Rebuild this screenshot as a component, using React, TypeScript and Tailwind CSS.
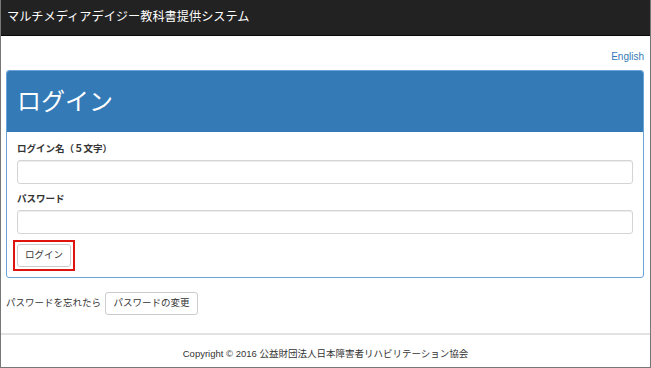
import React from 'react';

const jp = "font-['Liberation_Sans','Noto_Sans_CJK_JP',sans-serif]";

const App: React.FC = () => {
  return (
    <div className={`w-[651px] h-[368px] overflow-hidden bg-white border-x border-b border-[#777] ${jp}`}>
      <div className="h-[36px] bg-[#222] border-b border-[#080808] flex items-center pl-[6px]">
        <span className="text-[12.2px] text-white">マルチメディアデイジー教科書提供システム</span>
      </div>

      <div className="pl-[5px] pr-[6px]">
        <div className="flex justify-end h-[34px] items-center pt-[7px]">
          <a className="text-[10px] text-[#337ab7]">English</a>
        </div>

        <div className="border border-[#6aa3d8] rounded-[3px] overflow-hidden">
          <div className="h-[61px] bg-[#337ab7] flex items-center px-[10px]">
            <h1 className="text-[24px] text-white font-normal">ログイン</h1>
          </div>
          <div className="p-[10px]">
            <label className="block text-[9.5px] font-bold text-[#333] leading-[14px] mb-[4px]">ログイン名（５文字）</label>
            <input className="block w-full h-[24px] border border-[#d4d4d4] rounded-[3px] shadow-[inset_0_1px_1px_rgba(0,0,0,0.075)]" />
            <label className="block text-[9.5px] font-bold text-[#333] leading-[14px] mt-[8px] mb-[4px]">パスワード</label>
            <input type="password" className="block w-full h-[24px] border border-[#d4d4d4] rounded-[3px] shadow-[inset_0_1px_1px_rgba(0,0,0,0.075)]" />
            <div className="w-fit mt-[6px] -ml-[4px] -mb-[4px] border-2 border-[#e0140f] p-[2px]">
              <button className="block h-[23px] w-[54px] bg-white border border-[#ccc] rounded-[3px] text-[9.5px] text-[#333]">
                ログイン
              </button>
            </div>
          </div>
        </div>

        <div className="flex items-center mt-[14px] gap-[4px]">
          <span className="text-[9.5px] text-[#333]">パスワードを忘れたら</span>
          <button className="h-[23px] w-[93px] bg-white border border-[#ccc] rounded-[3px] text-[9.5px] text-[#333]">
            パスワードの変更
          </button>
        </div>
      </div>

      <hr className="mt-[18px] border-t-2 border-[#e2e2e2]" />
      <div className="text-center text-[9.5px] text-[#333] mt-[12px]">
        Copyright © 2016 公益財団法人日本障害者リハビリテーション協会
      </div>
    </div>
  );
};

export default App;
